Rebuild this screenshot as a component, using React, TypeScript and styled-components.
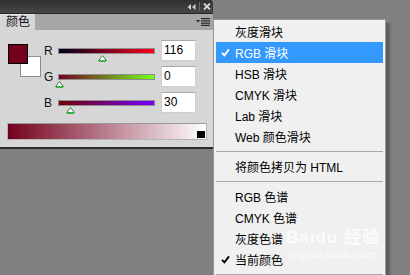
import React from "react";
import styled, { createGlobalStyle } from "styled-components";

const GlobalStyle = createGlobalStyle`
  html, body {
    margin: 0;
    padding: 0;
    background: #808080;
  }
  body {
    font-family: "Liberation Sans", "Noto Sans CJK SC", sans-serif;
    font-size: 12px;
    color: #111;
  }
`;

const Screen = styled.div`
  position: relative;
  width: 410px;
  height: 275px;
  overflow: hidden;
  background: #808080;
`;

const Panel = styled.div`
  width: 213px;
  display: flex;
  flex-direction: column;
`;

const TitleBar = styled.div`
  height: 13px;
  background: linear-gradient(#2f2f2f, #474747);
  border-bottom: 1px solid #242424;
  border-radius: 0 3px 0 0;
  display: flex;
  justify-content: flex-end;
  align-items: center;
  padding-right: 2px;
  gap: 3px;
`;

const TitleSep = styled.span`
  width: 1px;
  height: 9px;
  background: #6a6a6a;
`;

const TabBar = styled.div`
  height: 16px;
  background: #a6a6a6;
  display: flex;
  align-items: stretch;
  justify-content: space-between;
`;

const Tab = styled.div`
  width: 35px;
  box-sizing: border-box;
  background: #d6d6d6;
  border-top: 1px solid #e6e6e6;
  padding-left: 6px;
  line-height: 15px;
  font-size: 12px;
  color: #111;
`;

const MenuButton = styled.div`
  display: flex;
  align-items: center;
  padding-right: 3px;
`;

const Body = styled.div`
  height: 119px;
  box-sizing: border-box;
  background: #d6d6d6;
  border-bottom: 2px solid #2c2c2c;
  padding: 10px 6px 0 7px;
  display: flex;
  flex-direction: column;
`;

const Top = styled.div`
  display: flex;
  align-items: flex-start;
`;

const Swatches = styled.div`
  position: relative;
  width: 33px;
  height: 33px;
  margin: 4px 3px 0 1px;
`;

const Foreground = styled.div`
  position: relative;
  z-index: 1;
  width: 20px;
  height: 20px;
  box-sizing: border-box;
  border: 1px solid #000;
  background: #74001e;
`;

const Background = styled.div`
  position: absolute;
  left: 12px;
  top: 12px;
  width: 21px;
  height: 21px;
  box-sizing: border-box;
  border: 1px solid #8c8c8c;
  background: #fff;
`;

const Sliders = styled.div`
  display: flex;
  flex-direction: column;
`;

const Row = styled.div`
  display: flex;
  align-items: flex-start;
  height: 26px;
`;

const Label = styled.span`
  width: 14px;
  padding-top: 5px;
  line-height: 13px;
  font-size: 12px;
  color: #111;
`;

const Track = styled.div`
  position: relative;
  width: 97px;
  height: 22px;
  padding-top: 8px;
  box-sizing: border-box;
`;

const Bar = styled.div<{ $grad: string }>`
  height: 6px;
  box-sizing: border-box;
  border: 1px solid #8e8e8e;
  background: ${(p) => p.$grad};
`;

const Thumb = styled.svg`
  position: absolute;
  top: 15px;
  width: 9px;
  height: 7px;
`;

const ValueBox = styled.div`
  margin-left: 6px;
  width: 35px;
  height: 21px;
  box-sizing: border-box;
  background: #fff;
  border: 1px solid #cfcfcf;
  border-top-color: #a9a9a9;
  padding-left: 2px;
  line-height: 19px;
  font-size: 12px;
  color: #000;
`;

const Ramp = styled.div`
  position: relative;
  margin-top: 5px;
  width: 200px;
  height: 17px;
  box-sizing: border-box;
  border: 1px solid #b4b4b4;
  border-top-color: #999;
  background: linear-gradient(to right, #74001e, #ffffff);
`;

const RampChip = styled.div`
  position: absolute;
  right: 1px;
  bottom: 1px;
  width: 8px;
  height: 7px;
  background: #000;
`;

const Menu = styled.div`
  position: absolute;
  left: 213px;
  top: 19px;
  width: 173px;
  height: 270px;
  box-sizing: border-box;
  background: #f0f0f0;
  border: 1px solid #979797;
  padding: 1px 2px;
  box-shadow: 4px 4px 2px rgba(0, 0, 0, 0.28);
`;

const Item = styled.div<{ $active?: boolean }>`
  height: 21px;
  display: flex;
  align-items: center;
  background: ${(p) => (p.$active ? "#3399ff" : "transparent")};
  color: ${(p) => (p.$active ? "#fff" : "#000")};
  font-size: 12px;
`;

const CheckCol = styled.span`
  width: 19px;
  display: flex;
  justify-content: center;
`;

const Separator = styled.div`
  height: 9px;
  display: flex;
  align-items: center;
  &::after {
    content: "";
    flex: 1;
    height: 1px;
    background: #a8a8a8;
  }
`;

const Watermark = styled.div`
  position: absolute;
  left: 72px;
  top: 208px;
  color: rgba(255, 255, 255, 0.8);
  pointer-events: none;
`;

const WmBig = styled.div`
  font-size: 17px;
  font-weight: bold;
  line-height: 20px;
  letter-spacing: 1px;
`;

const WmSmall = styled.div`
  font-size: 11px;
  line-height: 12px;
  padding-left: 2px;
`;

const Check = ({ color }: { color: string }) => (
  <svg width="9" height="9" viewBox="0 0 9 9">
    <path d="M1 4.8 L3.4 7.4 L8 1.4" fill="none" stroke={color} strokeWidth="1.9" />
  </svg>
);

const SliderThumb = ({ value }: { value: number }) => {
  const center = 1 + (value / 255) * 95;
  return (
    <Thumb viewBox="0 0 9 7" style={{ left: center - 4.5 }}>
      <path d="M4.5 0.6 L8.4 5.6 L0.6 5.6 Z" fill="#fff" stroke="#2f7d3a" strokeWidth="1" />
      <rect x="1" y="5" width="7" height="2" fill="#3cb34a" />
    </Thumb>
  );
};

const channels = [
  { name: "R", value: 116, grad: "linear-gradient(to right, #00001e, #ff001e)" },
  { name: "G", value: 0, grad: "linear-gradient(to right, #74001e, #74ff1e)" },
  { name: "B", value: 30, grad: "linear-gradient(to right, #740000, #7400ff)" },
];

type Entry = { label?: string; checked?: boolean; active?: boolean; sep?: boolean };

const entries: Entry[] = [
  { label: "灰度滑块" },
  { label: "RGB 滑块", checked: true, active: true },
  { label: "HSB 滑块" },
  { label: "CMYK 滑块" },
  { label: "Lab 滑块" },
  { label: "Web 颜色滑块" },
  { sep: true },
  { label: "将颜色拷贝为 HTML" },
  { sep: true },
  { label: "RGB 色谱" },
  { label: "CMYK 色谱" },
  { label: "灰度色谱" },
  { label: "当前颜色", checked: true },
  { sep: true },
];

export default function App() {
  return (
    <>
      <GlobalStyle />
      <Screen>
        <Panel>
          <TitleBar>
            <svg width="9" height="6" viewBox="0 0 9 6">
              <path d="M4 0 L0.5 3 L4 6 Z M8.5 0 L5 3 L8.5 6 Z" fill="#cfcfcf" />
            </svg>
            <TitleSep />
            <svg width="8" height="7" viewBox="0 0 8 7">
              <path d="M1 0.5 L7 6.5 M7 0.5 L1 6.5" stroke="#d6d6d6" strokeWidth="1.8" />
            </svg>
          </TitleBar>
          <TabBar>
            <Tab>颜色</Tab>
            <MenuButton>
              <svg width="14" height="8" viewBox="0 0 14 8">
                <path d="M0 2 L4 2 L2 4.5 Z" fill="#2a2a2a" />
                <rect x="5" y="0" width="9" height="1.2" fill="#2a2a2a" />
                <rect x="5" y="2.3" width="9" height="1.2" fill="#2a2a2a" />
                <rect x="5" y="4.6" width="9" height="1.2" fill="#2a2a2a" />
                <rect x="5" y="6.8" width="9" height="1.2" fill="#2a2a2a" />
              </svg>
            </MenuButton>
          </TabBar>
          <Body>
            <Top>
              <Swatches>
                <Foreground />
                <Background />
              </Swatches>
              <Sliders>
                {channels.map((c) => (
                  <Row key={c.name}>
                    <Label>{c.name}</Label>
                    <Track>
                      <Bar $grad={c.grad} />
                      <SliderThumb value={c.value} />
                    </Track>
                    <ValueBox>{c.value}</ValueBox>
                  </Row>
                ))}
              </Sliders>
            </Top>
            <Ramp>
              <RampChip />
            </Ramp>
          </Body>
        </Panel>

        <Menu>
          {entries.map((e, i) =>
            e.sep ? (
              <Separator key={i} />
            ) : (
              <Item key={i} $active={e.active}>
                <CheckCol>{e.checked && <Check color={e.active ? "#fff" : "#000"} />}</CheckCol>
                {e.label}
              </Item>
            )
          )}
          <Watermark>
            <WmBig>Baidu 经验</WmBig>
            <WmSmall>jingyan.baidu.com</WmSmall>
          </Watermark>
        </Menu>
      </Screen>
    </>
  );
}
